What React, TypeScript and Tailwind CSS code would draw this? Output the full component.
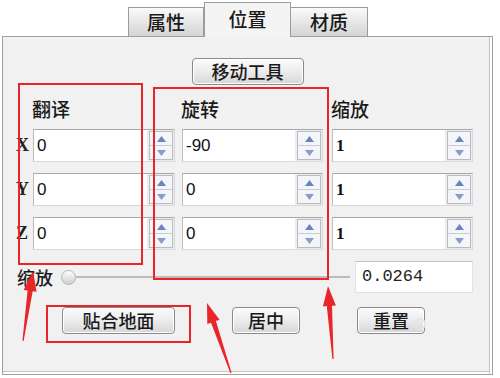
import React from "react";

const cjk = { fontFamily: '"Noto Sans CJK SC", "Noto Sans", sans-serif' };

type Pt = [number, number];

// tapered red arrow, tail -> tip
function arrowPoints(tail: Pt, tip: Pt) {
  const dx = tip[0] - tail[0];
  const dy = tip[1] - tail[1];
  const len = Math.hypot(dx, dy);
  const ux = dx / len;
  const uy = dy / len;
  const px = -uy;
  const py = ux;
  const head = 20;
  const base: Pt = [tip[0] - ux * head, tip[1] - uy * head];
  const pts: Pt[] = [
    [tail[0] + px * 0.6, tail[1] + py * 0.6],
    [base[0] + px * 2.6, base[1] + py * 2.6],
    [base[0] + px * 6.5, base[1] + py * 6.5],
    tip,
    [base[0] - px * 6.5, base[1] - py * 6.5],
    [base[0] - px * 2.6, base[1] - py * 2.6],
    [tail[0] - px * 0.6, tail[1] - py * 0.6],
  ];
  return pts.map((p) => `${p[0].toFixed(1)},${p[1].toFixed(1)}`).join(" ");
}

const arrows: [Pt, Pt][] = [
  [[23, 341], [33, 271]],
  [[231, 373], [207, 303]],
  [[333, 359], [328, 286]],
];

function Spinner() {
  return (
    <div className="mr-[1px] flex h-[29px] w-[24px] flex-col border border-[#b9bcc4] bg-[#f4f5f8]">
      <div className="flex flex-1 items-center justify-center border-b border-[#c8ccd6]">
        <svg width="9" height="6" viewBox="0 0 9 6">
          <polygon points="4.5,0 9,6 0,6" fill="#6a84c0" />
        </svg>
      </div>
      <div className="flex flex-1 items-center justify-center">
        <svg width="9" height="6" viewBox="0 0 9 6">
          <polygon points="0,0 9,0 4.5,6" fill="#8a9ccc" />
        </svg>
      </div>
    </div>
  );
}

function Field({ value, width, serif }: { value: string; width: string; serif?: boolean }) {
  return (
    <div className={`flex h-[33px] items-center border border-[#dadada] border-t-[#a9a9a9] border-l-[#bdbdbd] bg-[#ececec] ${width}`}>
      <div
        className="flex h-full flex-1 items-center bg-white pl-[3px] text-[17px] text-[#111]"
        style={{ fontFamily: serif ? '"Liberation Serif", serif' : '"Liberation Sans", sans-serif', fontWeight: serif ? 700 : 400 }}
      >
        {value}
      </div>
      <div className="ml-[2px]">
        <Spinner />
      </div>
    </div>
  );
}

const rows = [
  { axis: "X", t: "0", r: "-90", s: "1" },
  { axis: "Y", t: "0", r: "0", s: "1" },
  { axis: "Z", t: "0", r: "0", s: "1" },
];

function Button({ label, width }: { label: string; width: string }) {
  return (
    <div
      className={`flex h-[27px] items-center justify-center rounded-[4px] border border-[#8a8a8a] bg-gradient-to-b from-[#fbfbfb] via-[#ececec] to-[#d6d6d6] text-[18px] font-medium text-[#1a1a1a] shadow-[inset_0_0_0_1px_#ffffff] ${width}`}
      style={cjk}
    >
      {label}
    </div>
  );
}

export default function App() {
  return (
    <div className="relative h-[378px] w-[500px] overflow-hidden bg-white" style={cjk}>
      <div className="flex h-[36px] items-end pl-[128px]">
        <div className="flex h-[29px] w-[76px] items-center justify-center border border-b-0 border-[#9c9c9c] bg-gradient-to-b from-[#fafafa] to-[#d4d4d4] text-[19px] font-medium text-[#1a1a1a]">
          属性
        </div>
        <div className="relative z-10 -mb-px flex h-[35px] w-[87px] items-center justify-center border border-b-0 border-[#9c9c9c] bg-[#f4f4f4] pb-[2px] text-[19px] font-medium text-[#1a1a1a]">
          位置
        </div>
        <div className="flex h-[29px] w-[77px] items-center justify-center border border-b-0 border-l-0 border-[#9c9c9c] bg-gradient-to-b from-[#fafafa] to-[#d4d4d4] text-[19px] font-medium text-[#1a1a1a]">
          材质
        </div>
      </div>

      <div className="ml-[2px] h-[339px] w-[491px] border border-[#a0a0a0] bg-[#f1f1f1] pl-[14px] shadow-[inset_-2px_0_0_#ffffff,inset_-3px_0_0_#c4c4c4,inset_0_-2px_0_#ffffff,inset_0_-3px_0_#c4c4c4]">
        <div className="mt-[21px] flex justify-center pr-[14px]">
          <Button label="移动工具" width="w-[112px]" />
        </div>

        <div className="mt-[12px] flex h-[22px] items-center text-[19px] font-medium leading-none text-[#1a1a1a]">
          <div className="w-[15px]" />
          <div className="w-[149px]">翻译</div>
          <div className="w-[150px]">旋转</div>
          <div>缩放</div>
        </div>

        <div className="mt-[10px] flex flex-col gap-[11px]">
          {rows.map((row) => (
            <div key={row.axis} className="flex items-center">
              <div className="-ml-[1px] w-[17px] text-[18px] font-bold text-[#222]" style={{ fontFamily: '"Liberation Serif", serif' }}>
                {row.axis}
              </div>
              <Field value={row.t} width="w-[142px]" />
              <div className="w-[7px]" />
              <Field value={row.r} width="w-[141px]" />
              <div className="w-[9px]" />
              <Field value={row.s} width="w-[141px]" serif />
            </div>
          ))}
        </div>

        <div className="mt-[11px] flex h-[32px] items-center">
          <div className="w-[44px] text-[18px] font-medium text-[#1a1a1a]">缩放</div>
          <div className="h-[15px] w-[15px] rounded-full border border-[#b5b5b5] bg-gradient-to-b from-[#ffffff] to-[#cfcfcf]" />
          <div className="h-[2px] w-[274px] bg-[#bcbcbc]" />
          <div className="w-[5px]" />
          <div
            className="flex h-[32px] w-[118px] items-center border border-[#e2e2e2] border-t-[#c4c4c4] bg-white pl-[6px] text-[17px] text-[#222]"
            style={{ fontFamily: '"Liberation Mono", monospace' }}
          >
            0.0264
          </div>
        </div>

        <div className="mt-[14px] flex items-center">
          <div className="w-[45px]" />
          <Button label="贴合地面" width="w-[113px]" />
          <div className="w-[57px]" />
          <Button label="居中" width="w-[68px]" />
          <div className="w-[57px]" />
          <Button label="重置" width="w-[68px]" />
        </div>
      </div>

      {/* annotations */}
      <div className="pointer-events-none absolute left-[18px] top-[83px] h-[182px] w-[125px] border-2 border-[#e8262a]" />
      <div className="pointer-events-none absolute left-[153px] top-[87px] h-[193px] w-[176px] border-2 border-[#e8262a]" />
      <div className="pointer-events-none absolute left-[46px] top-[305px] h-[38px] w-[145px] border-2 border-[#e8262a]" />
      <div className="pointer-events-none absolute left-[414px] top-[318px] h-[12px] w-[12px] rounded-full border-2 border-[#e4e4e4]" />
      <svg className="pointer-events-none absolute left-0 top-0" width="500" height="378">
        {arrows.map(([tail, tip], i) => (
          <polygon key={i} points={arrowPoints(tail, tip)} fill="#e8262a" />
        ))}
      </svg>
    </div>
  );
}
